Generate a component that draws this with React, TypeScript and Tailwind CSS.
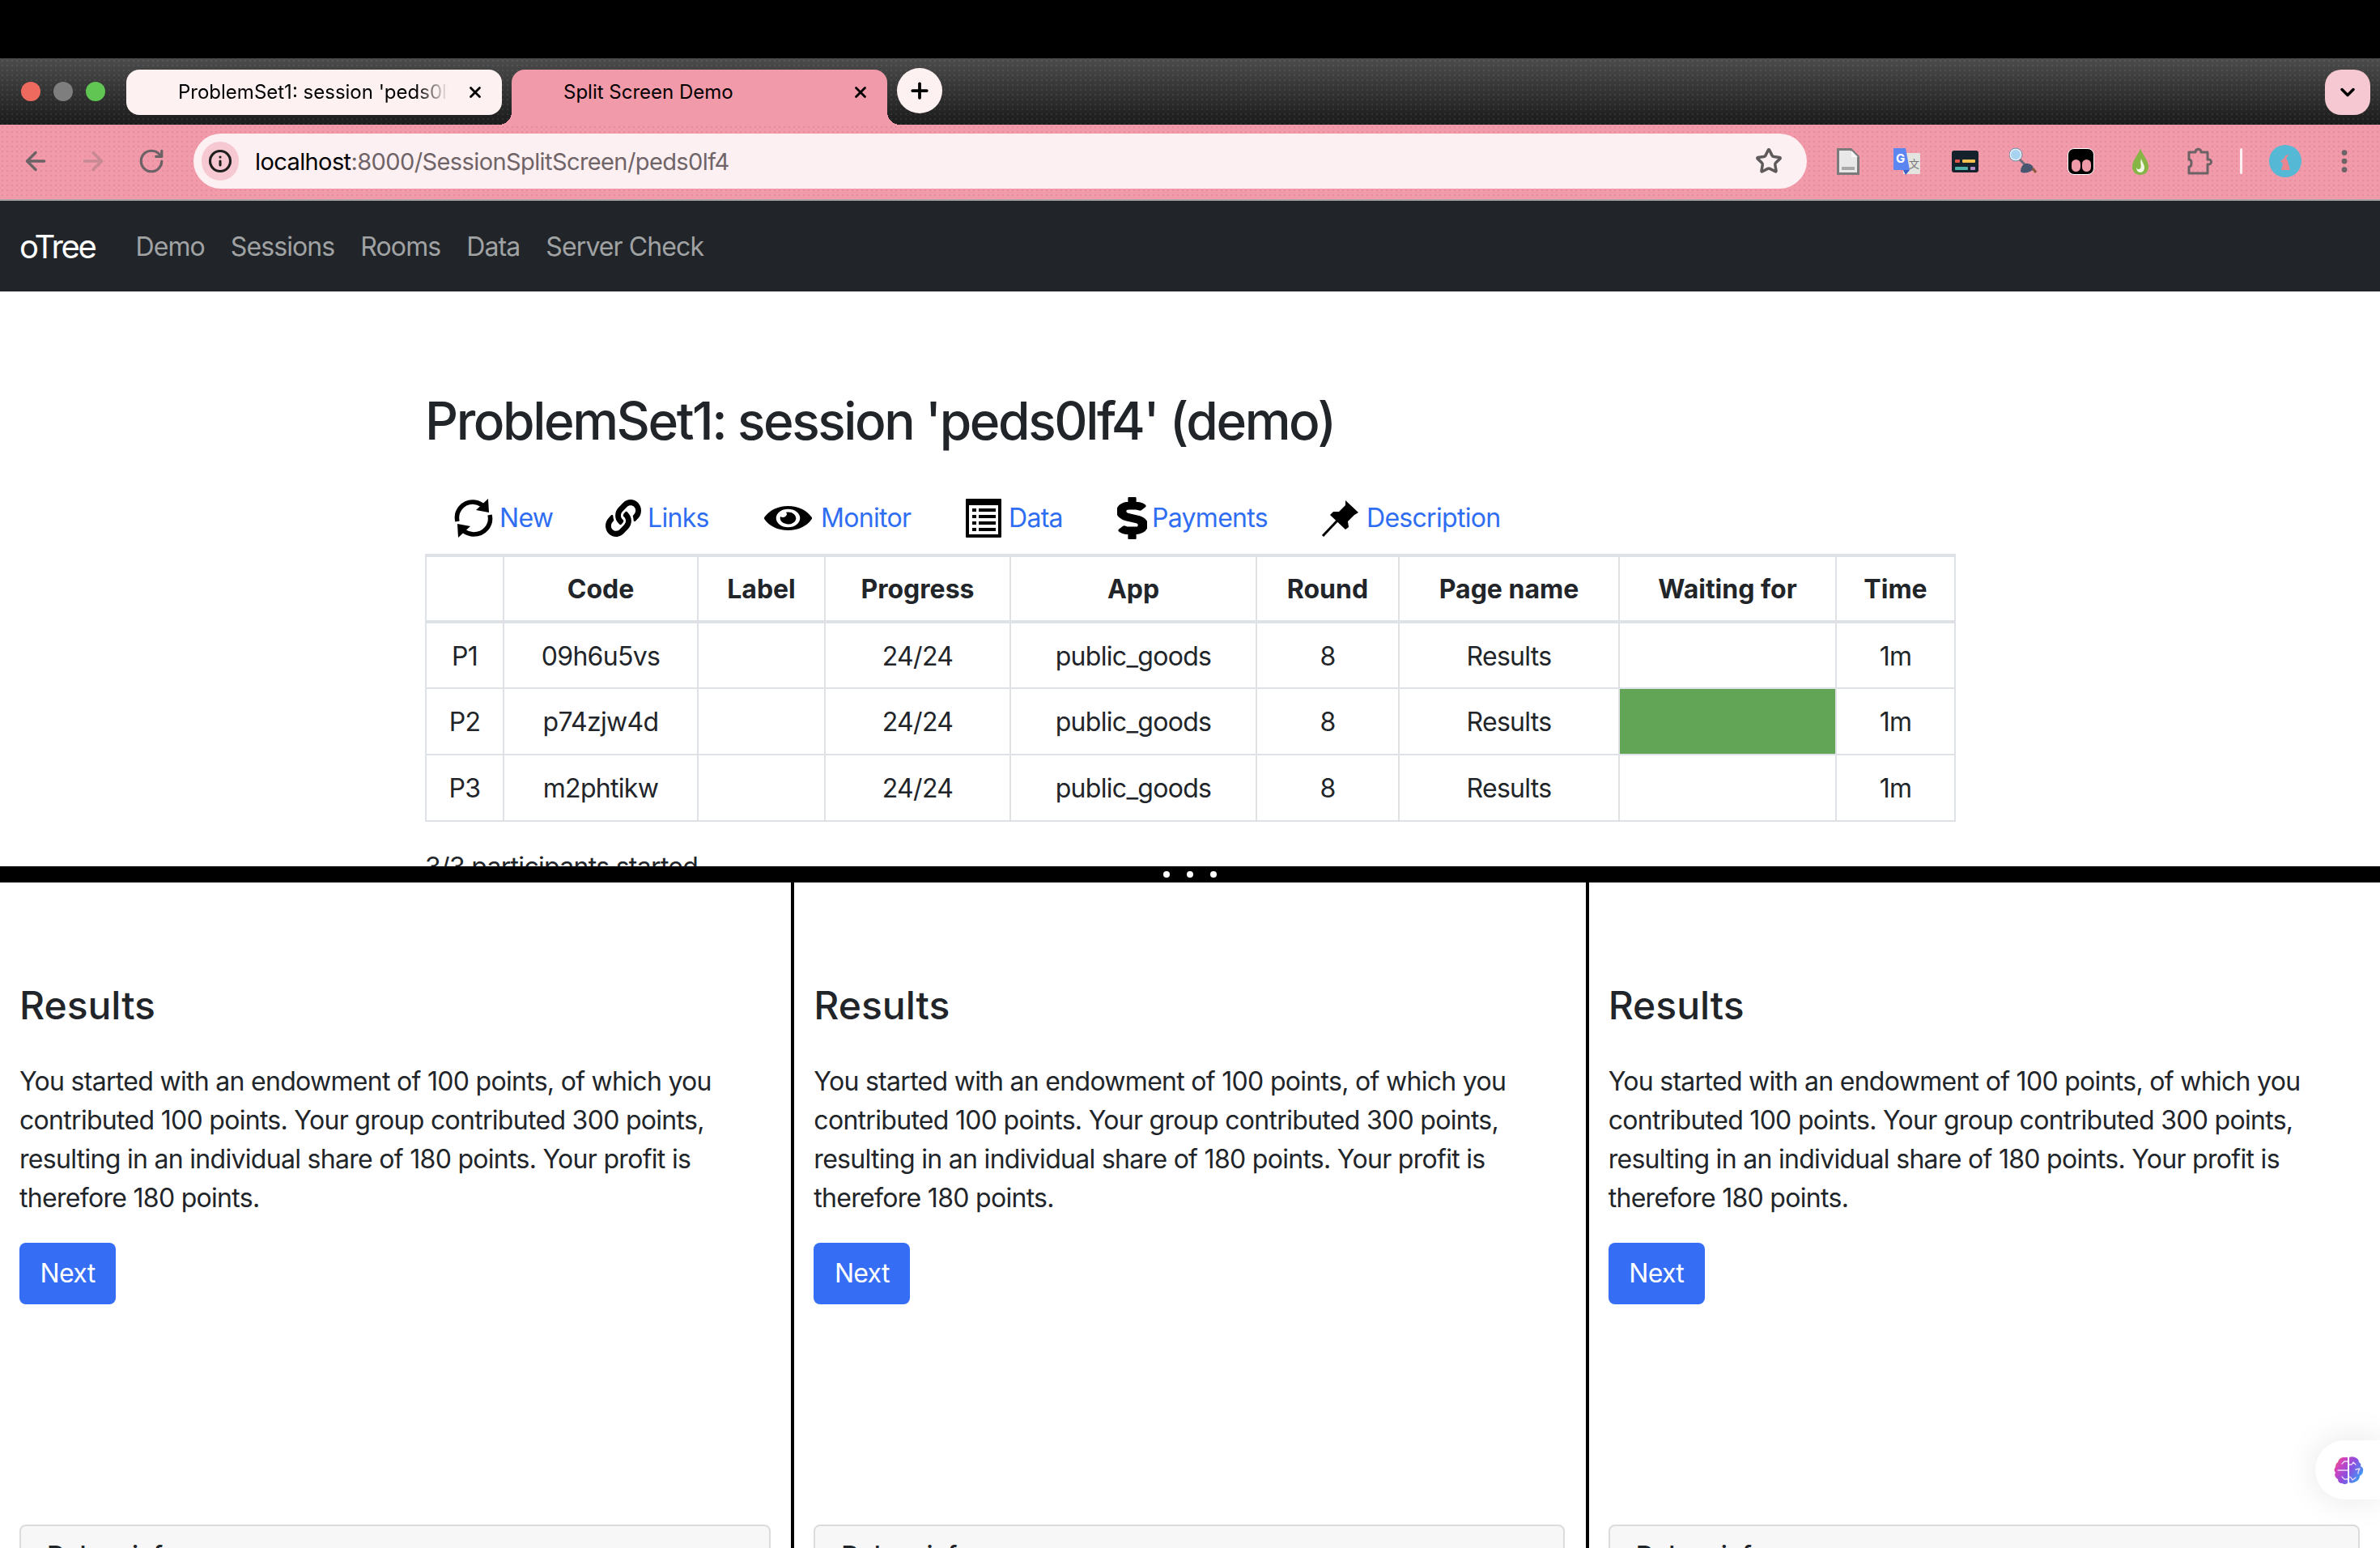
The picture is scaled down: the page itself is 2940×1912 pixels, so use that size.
import React from 'react';
import { ArrowLeft, ArrowRight, RotateCw, Info, Star, X, Plus, ChevronDown, EllipsisVertical } from 'lucide-react';
import { FaEye, FaDollarSign, FaLink } from 'react-icons/fa';

const sans = "font-['Inter',sans-serif]";

const navLinks = ['Demo', 'Sessions', 'Rooms', 'Data', 'Server Check'];

function RefreshIcon() {
  return (
    <svg viewBox="0 0 50 50" className="w-[50px] h-[50px]">
      <g fill="none" stroke="#000" strokeWidth="5.500">
        <path d="M5 29C2 16 12 5 24 5c5 0 9 2 12 4" />
        <path d="M45 21c3 13-7 24-20 24-5 0-9-2-12-4" />
      </g>
      <path d="M43 1l1 17-16-3zM6 49l-1-17 16 3z" fill="#000" />
    </svg>
  );
}

function DataIcon() {
  return (
    <svg viewBox="0 0 44 48" className="w-[44px] h-[48px]">
      <rect width="44" height="48" rx="1" fill="#000" />
      <rect x="4" y="8" width="36" height="36" fill="#fff" />
      <g fill="#000">
        <rect x="8" y="12" width="5" height="4" />
        <rect x="16" y="12" width="21" height="4" />
        <rect x="8" y="20" width="5" height="4" />
        <rect x="16" y="20" width="21" height="4" />
        <rect x="8" y="28" width="5" height="4" />
        <rect x="16" y="28" width="21" height="4" />
        <rect x="8" y="36" width="5" height="4" />
        <rect x="16" y="36" width="21" height="4" />
      </g>
    </svg>
  );
}

function PinIcon() {
  return (
    <svg viewBox="0 0 47 46" className="w-[47px] h-[46px]">
      <path d="M2 45l18-19" stroke="#000" strokeWidth="3" />
      <path d="M30 1l16 15-5 3-8 8 1 7-4 3-19-18 4-4 7 0 8-8z" fill="#000" />
    </svg>
  );
}

function BrainIcon() {
  return (
    <svg viewBox="0 0 38 36" className="w-[38px] h-[36px]">
      <defs>
        <linearGradient id="brainGrad" x1="0" y1="0" x2="1" y2="0.6">
          <stop offset="0" stopColor="#e0803a" />
          <stop offset="0.25" stopColor="#d843b8" />
          <stop offset="0.6" stopColor="#8a4fe0" />
          <stop offset="1" stopColor="#3f9bf5" />
        </linearGradient>
      </defs>
      <path
        fill="url(#brainGrad)"
        d="M18 2v32c-2 1.500-5 1.500-7 0-3 0-5-2-5-5-3-1.500-5-5-3-8-2-2-2-5 0-7 0-3 1-5 3-6 1-4 4-6 7-6 2 0 4 0 5 0zM20 2c2-1 5-1 7 0 3 1 5 3 5 6 2 1 3 3 2 5 2 1 4 3 3 6 0 3-2 5-4 6 0 3-2 6-5 7-3 2-6 2-8 1z"
      />
      <g fill="none" stroke="#ecdcfb" strokeWidth="1.300" strokeLinecap="round">
        <path d="M18 18H6M18 7h-4l-3 3M18 29h-4l-3-3" />
        <path d="M25 8l-2 3h-3M25 8l3 3M24 30l-2-3-2-1M24 30l4-3M33 16l-2 4v2M33 16l-5 1" />
      </g>
    </svg>
  );
}

function ExtensionIcons() {
  return (
    <div className="flex items-center ml-[37px]">
      {/* blank page */}
      <svg viewBox="0 0 28 33" className="w-[28px] h-[33px]">
        <path d="M1.500 1.500h16l9 9v21h-25z" fill="#e8e8e8" stroke="#7b7b7b" strokeWidth="3" />
        <path d="M18 3v8h8" fill="#f7f7f7" />
        <rect x="6" y="23" width="16" height="4" fill="#a9a9a9" />
      </svg>
      {/* translate */}
      <svg viewBox="0 0 33 33" className="w-[33px] h-[33px] ml-[42px]">
        <rect x="12" y="6" width="21" height="26" rx="1" fill="#e3e3e0" />
        <path d="M0 0h15l5 27H9H1a1 1 0 0 1-1-1z" fill="#5b86f2" />
        <path d="M12 27h8l-5 6z" fill="#3a5fc4" />
        <text x="3" y="18" fontSize="15" fontWeight="700" fill="#fff" fontFamily="Inter, sans-serif">G</text>
        <text x="19" y="24" fontSize="13" fill="#777" fontFamily="Noto Sans CJK SC, sans-serif">文</text>
      </svg>
      {/* dark terminal */}
      <div className="w-[33px] h-[27px] ml-[39px] rounded-[3px] bg-[#15222b] px-[4px] flex flex-col justify-center gap-[5px] pt-[8px]">
        <div className="flex gap-[3px]">
          <div className="w-[6px] h-[4px] rounded-[1px] bg-[#e2574c]" />
          <div className="w-[16px] h-[4px] rounded-[1px] bg-[#f2c14e]" />
        </div>
        <div className="flex gap-[3px]">
          <div className="w-[16px] h-[4px] rounded-[1px] bg-[#4fb3ac]" />
          <div className="w-[6px] h-[4px] rounded-[1px] bg-[#b58fc4]" />
        </div>
      </div>
      {/* magnifier */}
      <svg viewBox="0 0 34 34" className="w-[34px] h-[34px] ml-[38px]">
        <circle cx="8" cy="9" r="7" fill="#a6d4f0" stroke="#e6edf2" strokeWidth="2" />
        <circle cx="8" cy="9" r="8" fill="none" stroke="#6f8ea8" strokeWidth="1" />
        <path d="M13 15l6 6" stroke="#6d6d80" strokeWidth="3" />
        <path d="M14 30c0-6 4-11 9-10 5 1 8 4 6 8-4 3-11 5-15 2z" fill="#4a5570" />
        <path d="M29 26l4 5" stroke="#8a5a3c" strokeWidth="3" />
      </svg>
      {/* eyes */}
      <div className="w-[33px] h-[33px] ml-[38px] rounded-[8px] bg-black border border-white flex items-end justify-center gap-[2px] pb-[3px]">
        <div className="w-[11px] h-[15px] rounded-full bg-[#ee9aa8]" />
        <div className="w-[11px] h-[15px] rounded-full bg-[#ee9aa8]" />
      </div>
      {/* flame */}
      <svg viewBox="0 0 20 33" className="w-[20px] h-[33px] ml-[47px]">
        <path d="M10 0c2 8 10 14 10 23 0 6-4 10-10 10S0 29 0 23C0 14 8 8 10 0z" fill="#86b545" />
        <path d="M11 13c1 4 4 7 4 11 0 3-2 6-5 6s-5-3-5-6c1 2 3 3 5 1 2-3-1-7 1-12z" fill="#f2f7e4" />
      </svg>
      {/* extensions puzzle */}
      <svg viewBox="0 0 32 34" className="w-[32px] h-[34px] ml-[48px]">
        <path
          d="M2 6h8c0-5 7-5 7 0h8v9c6-1 6 7 0 6v11H2v-8c4 0 4-9 0-9z"
          fill="none"
          stroke="#6b6266"
          strokeWidth="3"
          strokeLinejoin="round"
        />
      </svg>
      <div className="w-[3px] h-[32px] ml-[33px] bg-[#fdf0f2] rounded-full" />
      {/* profile */}
      <div className="w-[40px] h-[40px] ml-[33px] rounded-full bg-[#55b8d4] flex items-center justify-center">
        <svg viewBox="0 0 20 26" className="w-[20px] h-[26px]">
          <path d="M12 0l-2 6 5-1-4 4 2 4 3 11H5l2-8-3-3 5-4z" fill="#e98590" />
        </svg>
      </div>
      <EllipsisVertical className="w-[36px] h-[36px] ml-[35px] text-[#6b6266]" strokeWidth={2.500} />
    </div>
  );
}

function BrowserChrome() {
  return (
    <div className="text-black tracking-normal">
      <div className="h-[72px] bg-black" />
      <div className="h-[82px] bg-[radial-gradient(circle,rgba(255,255,255,0.07)_1px,transparent_1.500px),linear-gradient(to_bottom,#4c4c4c,#1b1b1b)] bg-[length:6px_6px,100%_100%] flex pt-[14px] overflow-hidden">
        <div className="flex items-center gap-[16px] pl-[26px] h-[54px] w-[156px]">
          <div className="w-[24px] h-[24px] rounded-full bg-[#ee6a5f]" />
          <div className="w-[24px] h-[24px] rounded-full bg-[#7e7e7e]" />
          <div className="w-[24px] h-[24px] rounded-full bg-[#61c554]" />
        </div>
        <div className="w-[464px] h-[56px] rounded-[16px] bg-[#fdf1f2] flex items-center pl-[64px] pr-[22px] text-[24px]">
          <span className="flex-1 overflow-hidden whitespace-nowrap [mask-image:linear-gradient(to_right,black_88%,transparent)]">ProblemSet1: session 'peds0lf4' (demo)</span>
          <X className="w-[22px] h-[22px] ml-[22px] shrink-0" strokeWidth={3} />
        </div>
        <div className="relative w-[464px] h-[68px] ml-[12px] rounded-t-[16px] bg-[#f19aa9] flex items-center pl-[64px] pr-[22px] pb-[12px] text-[24px] before:absolute before:left-[-16px] before:bottom-0 before:w-[16px] before:h-[16px] before:bg-[radial-gradient(circle_at_0_0,transparent_16px,#f19aa9_16px)] after:absolute after:right-[-16px] after:bottom-0 after:w-[16px] after:h-[16px] after:bg-[radial-gradient(circle_at_100%_0,transparent_16px,#f19aa9_16px)]">
          <span className="flex-1 whitespace-nowrap">Split Screen Demo</span>
          <X className="w-[22px] h-[22px] shrink-0" strokeWidth={3} />
        </div>
        <div className="relative w-[56px] h-[56px] ml-[12px] -mt-[2px] rounded-full bg-[#fdf1f2] flex items-center justify-center">
          <Plus className="w-[30px] h-[30px]" strokeWidth={3} />
        </div>
        <div className="flex-1" />
        <div className="w-[56px] h-[56px] mr-[12px] rounded-[20px] bg-[#f6c8d1] flex items-center justify-center">
          <ChevronDown className="w-[28px] h-[28px]" strokeWidth={3} />
        </div>
      </div>
      <div className="h-[94px] bg-[radial-gradient(circle,rgba(205,90,120,0.22)_1px,transparent_1.500px)] bg-[length:6px_6px] bg-[#f19aa9] border-b-2 border-[#a9a3a5] flex items-center pb-[2px]">
        <ArrowLeft className="w-[36px] h-[36px] ml-[26px] text-[#6b6266]" strokeWidth={2.250} />
        <ArrowRight className="w-[36px] h-[36px] ml-[35px] text-[#c78a94]" strokeWidth={2.250} />
        <RotateCw className="w-[34px] h-[34px] ml-[37px] text-[#6b6266]" strokeWidth={2.250} />
        <div className="w-[1993px] h-[68px] ml-[35px] rounded-full bg-[#fdf0f2] flex items-center pl-[10px] pr-[30px]">
          <div className="w-[46px] h-[48px] rounded-full bg-[#f6c8d1] flex items-center justify-center">
            <Info className="w-[30px] h-[30px] text-[#1f1f1f]" strokeWidth={2.500} />
          </div>
          <span className="ml-[20px] pt-[2px] text-[29px] tracking-[-0.6px] text-black">localhost<span className="text-[#6f6468]">:8000/SessionSplitScreen/peds0lf4</span></span>
          <div className="flex-1" />
          <Star className="w-[34px] h-[34px] text-[#5f5a5c]" strokeWidth={2.500} />
        </div>
        <ExtensionIcons />
      </div>
    </div>
  );
}

function Navbar() {
  return (
    <nav className="h-[112px] shrink-0 bg-[#212529] flex items-center pl-[24px] pt-[2px] tracking-[-0.9px]">
      <span className="text-[40px] text-white mr-[34px] tracking-[-2.400px]">oTree</span>
      {navLinks.map((link) => (
        <span key={link} className="px-[16px] text-[32px] text-[#a0a2a4]">{link}</span>
      ))}
    </nav>
  );
}

function SessionPane() {
  const cell = 'border-2 border-[#dee2e6] text-center pt-[2px]';
  return (
    <div className="h-[710px] shrink-0 overflow-hidden bg-white">
      <div className="w-[1890px] ml-[525px] pt-[121px]">
        <h2 className="text-[64px] leading-[77px] font-medium tracking-[-2.400px] text-[#212529]">ProblemSet1: session 'peds0lf4' (demo)</h2>
        {/* action links, each slot runs up to the next icon */}
        <div className="flex items-center h-[52px] mt-[56px] pl-[35px] text-[32px] text-[#2f6ef3]">
          <div className="flex items-center w-[188px]">
            <div className="w-[57px]"><RefreshIcon /></div>
            <span>New</span>
          </div>
          <div className="flex items-center w-[196px]">
            <div className="w-[52px]"><FaLink className="w-[44px] h-[46px] text-black" preserveAspectRatio="none" /></div>
            <span>Links</span>
          </div>
          <div className="flex items-center w-[249px]">
            <div className="w-[70px]"><FaEye className="w-[59px] h-[40px] text-black" preserveAspectRatio="none" /></div>
            <span>Monitor</span>
          </div>
          <div className="flex items-center w-[187px]">
            <div className="w-[53px]"><DataIcon /></div>
            <span>Data</span>
          </div>
          <div className="flex items-center w-[252px]">
            <div className="w-[43px]"><FaDollarSign className="w-[37px] h-[52px] text-black stroke-black stroke-[16px]" preserveAspectRatio="none" /></div>
            <span>Payments</span>
          </div>
          <div className="flex items-center">
            <div className="w-[56px]"><PinIcon /></div>
            <span>Description</span>
          </div>
        </div>
        <table className="w-[1889px] mt-[18px] table-fixed border-collapse border-t-4 border-[#dee2e6] text-[32px] text-[#212529]">
          <thead>
            <tr className="h-[82px] border-b-4 border-[#dee2e6] tracking-normal">
              <th className={`w-[96px] ${cell} border-t-0`} />
              <th className={`w-[240px] ${cell} border-t-0`}>Code</th>
              <th className={`w-[157px] ${cell} border-t-0`}>Label</th>
              <th className={`w-[229px] ${cell} border-t-0`}>Progress</th>
              <th className={`w-[304px] ${cell} border-t-0`}>App</th>
              <th className={`w-[176px] ${cell} border-t-0`}>Round</th>
              <th className={`w-[272px] ${cell} border-t-0`}>Page name</th>
              <th className={`w-[268px] ${cell} border-t-0`}>Waiting for</th>
              <th className={`w-[147px] ${cell} border-t-0`}>Time</th>
            </tr>
          </thead>
          <tbody>
            <tr className="h-[82px]">
              <td className={cell}>P1</td>
              <td className={cell}>09h6u5vs</td>
              <td className={cell} />
              <td className={cell}>24/24</td>
              <td className={cell}>public_goods</td>
              <td className={cell}>8</td>
              <td className={cell}>Results</td>
              <td className={cell} />
              <td className={cell}>1m</td>
            </tr>
            <tr className="h-[82px]">
              <td className={cell}>P2</td>
              <td className={cell}>p74zjw4d</td>
              <td className={cell} />
              <td className={cell}>24/24</td>
              <td className={cell}>public_goods</td>
              <td className={cell}>8</td>
              <td className={cell}>Results</td>
              <td className={`${cell} bg-[#62a557]`} />
              <td className={cell}>1m</td>
            </tr>
            <tr className="h-[82px]">
              <td className={cell}>P3</td>
              <td className={cell}>m2phtikw</td>
              <td className={cell} />
              <td className={cell}>24/24</td>
              <td className={cell}>public_goods</td>
              <td className={cell}>8</td>
              <td className={cell}>Results</td>
              <td className={cell} />
              <td className={cell}>1m</td>
            </tr>
          </tbody>
        </table>
        <p className="mt-[32px] text-[32px] leading-[48px] text-[#212529]">3/3 participants started</p>
      </div>
    </div>
  );
}

function Divider() {
  return (
    <div className="h-[20px] shrink-0 bg-black flex items-center justify-center gap-[21px]">
      <div className="w-[8px] h-[8px] rounded-full bg-white" />
      <div className="w-[8px] h-[8px] rounded-full bg-white" />
      <div className="w-[8px] h-[8px] rounded-full bg-white" />
    </div>
  );
}

function ResultsPanel({ last }: { last?: boolean }) {
  return (
    <div className={`flex-1 min-w-0 h-full overflow-hidden bg-white px-[24px] pt-[121px] ${last ? '' : 'border-r-4 border-black'}`}>
      <h3 className="text-[48px] leading-[62px] font-medium tracking-normal text-[#212529]">Results</h3>
      <p className="mt-[39px] text-[32px] leading-[48px] text-[#212529]">
        You started with an endowment of 100 points, of which you contributed 100 points. Your group contributed 300 points, resulting in an individual share of 180 points. Your profit is therefore 180 points.
      </p>
      <button className="mt-[31px] h-[76px] w-[119px] rounded-[8px] bg-[#356ef5] text-white text-[32px]">Next</button>
      <div className="mt-[272px] w-[928px] rounded-t-[8px] border-2 border-[#dcdcdc] bg-[#f7f7f7] px-[32px] pt-[13px] pb-[16px] text-[32px] leading-[48px] font-medium text-[#212529]">
        Debug info
      </div>
    </div>
  );
}

export default function App() {
  return (
    <div className={`${sans} tracking-[-0.7px] relative w-[2940px] h-[1912px] overflow-hidden bg-white flex flex-col`}>
      <BrowserChrome />
      <Navbar />
      <SessionPane />
      <Divider />
      <div className="flex-1 min-h-0 flex">
        <ResultsPanel />
        <ResultsPanel />
        <ResultsPanel last />
      </div>
      <div className="absolute right-0 top-[1779px] w-[80px] h-[73px] bg-white rounded-l-full shadow-[0_0_40px_rgba(0,0,0,0.1)] flex items-center pl-[22px]">
        <BrainIcon />
      </div>
    </div>
  );
}
